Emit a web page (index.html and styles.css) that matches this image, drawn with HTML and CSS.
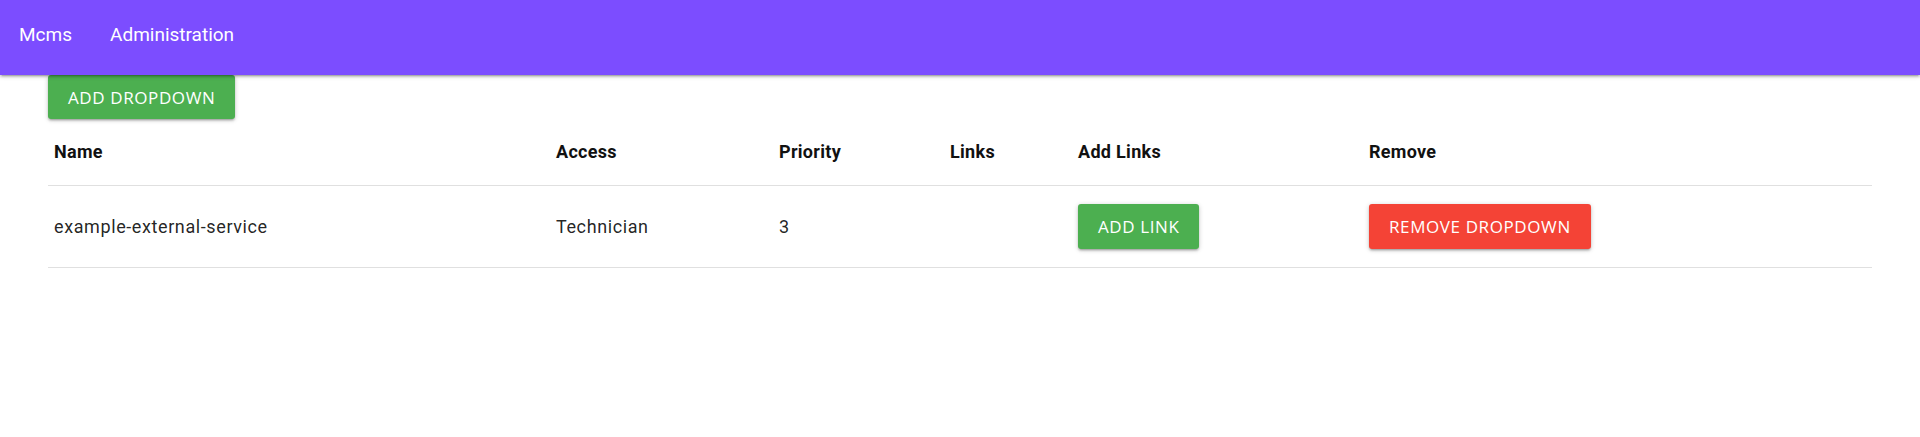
FILE: index.html
```html
<!DOCTYPE html>
<html>
<head>
<meta charset="utf-8">
<title>Mcms - Administration</title>
<link rel="stylesheet" href="styles.css">
</head>
<body>
<nav class="navbar">
  <a class="nav-link" href="#">Mcms</a>
  <a class="nav-link" href="#">Administration</a>
</nav>
<main class="container">
  <button class="btn btn-green">ADD DROPDOWN</button>
  <table class="table">
    <colgroup>
      <col class="c-name"><col class="c-access"><col class="c-priority"><col class="c-links"><col class="c-add"><col class="c-remove">
    </colgroup>
    <thead>
      <tr>
        <th>Name</th><th>Access</th><th>Priority</th><th>Links</th><th>Add Links</th><th>Remove</th>
      </tr>
    </thead>
    <tbody>
      <tr>
        <td>example-external-service</td>
        <td>Technician</td>
        <td>3</td>
        <td></td>
        <td><button class="btn btn-green btn-row">ADD LINK</button></td>
        <td><button class="btn btn-red btn-row">REMOVE DROPDOWN</button></td>
      </tr>
    </tbody>
  </table>
</main>
</body>
</html>
```

FILE: styles.css
```css
html, body {
  margin: 0;
  padding: 0;
  background: #ffffff;
  font-family: Roboto, "Noto Sans", sans-serif;
  color: rgba(0, 0, 0, 0.87);
}

.navbar {
  height: 75px;
  background: #7c4dff;
  display: flex;
  align-items: center;
  gap: 38px;
  padding: 0 0 6px 19px;
  box-sizing: border-box;
  box-shadow: 0 2px 2px 0 rgba(0,0,0,0.14), 0 3px 1px -2px rgba(0,0,0,0.12), 0 1px 5px 0 rgba(0,0,0,0.2);
  position: relative;
  z-index: 1;
}

.nav-link {
  color: #ffffff;
  text-decoration: none;
  font-size: 19px;
}

.container {
  padding: 0 48px;
}

.btn {
  height: 44px;
  border: none;
  border-radius: 3px;
  padding: 0 20px;
  color: #ffffff;
  font-family: "Open Sans", sans-serif;
  font-size: 17px;
  letter-spacing: 0.6px;
  cursor: pointer;
  box-shadow: 0 2px 2px 0 rgba(0,0,0,0.14), 0 3px 1px -2px rgba(0,0,0,0.12), 0 1px 5px 0 rgba(0,0,0,0.2);
  vertical-align: middle;
}

.btn-row { height: 45px; }

.btn-green { background: #4caf50; }
.btn-red { background: #f44336; }

.table {
  width: 100%;
  border-collapse: collapse;
  table-layout: fixed;
}

.c-name { width: 502px; }
.c-access { width: 223px; }
.c-priority { width: 171px; }
.c-links { width: 128px; }
.c-add { width: 291px; }

.table th {
  text-align: left;
  font-weight: 700;
  font-size: 18px;
  letter-spacing: 0.3px;
  color: #111;
  padding: 18px 6px;
  line-height: 30px;
}

.table td {
  font-size: 18px;
  letter-spacing: 0.6px;
  padding: 18px 6px;
  line-height: 24px;
  vertical-align: middle;
}

.table tr {
  border-bottom: 1px solid rgba(0, 0, 0, 0.12);
}
```
